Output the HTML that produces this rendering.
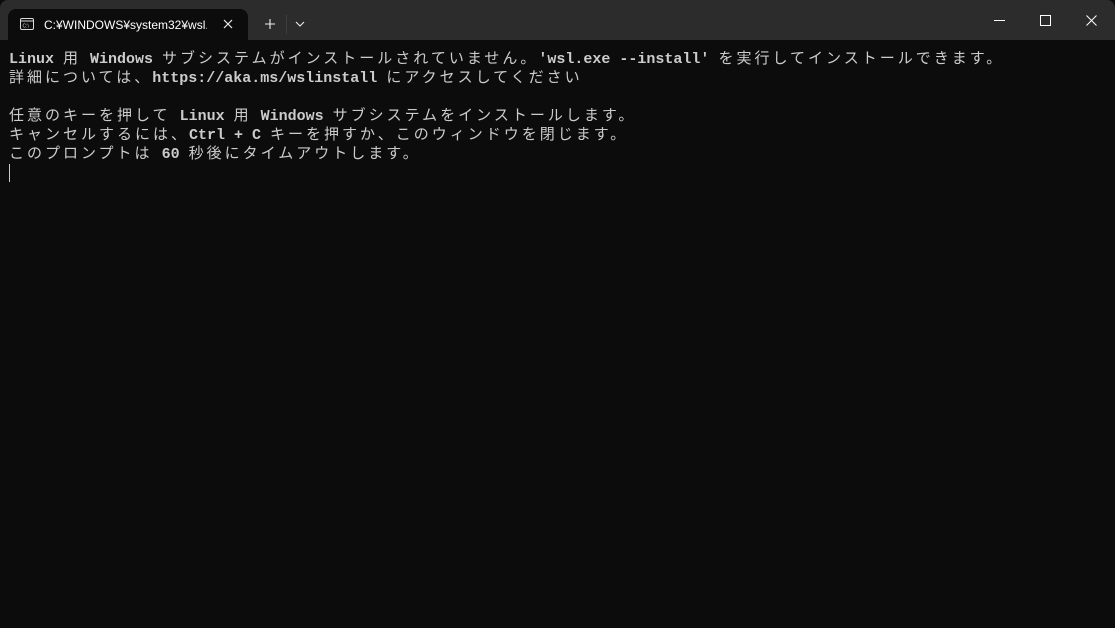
<!DOCTYPE html>
<html><head><meta charset="utf-8"><style>
html,body{margin:0;padding:0;width:1115px;height:628px;overflow:hidden;background:#0c0c0c}
.title{position:absolute;left:0;top:0;width:1115px;height:40px;background:#2c2c2c;border-radius:8px 8px 0 0}
.tab{position:absolute;left:8px;top:9px;width:240px;height:31px;background:#0c0c0c;border-radius:8px 8px 0 0}
.tabtxt{position:absolute;left:44px;top:17px;font:12px/16px "Liberation Sans","Noto Sans CJK JP",sans-serif;color:#fff;white-space:nowrap;width:163px;overflow:hidden}
.term{position:absolute;left:9px;top:48px;color:#cccccc;font:bold 15px/19px "Liberation Mono",monospace}
.term div{height:19px;white-space:pre;overflow:visible}
.j{font-family:"Noto Sans CJK JP",sans-serif;font-weight:normal;letter-spacing:3px;line-height:19px}
.cursor{position:absolute;left:9px;top:164px;width:1px;height:18px;background:#ccc}
</style></head><body>
<div class="title"></div>
<div class="tab"></div>
<svg style="position:absolute;left:20px;top:18px" width="14" height="12" viewBox="0 0 14 12"><rect x="0.5" y="0.5" width="13" height="11" rx="1.5" fill="none" stroke="#ddd"/><line x1="0.5" y1="3" x2="13.5" y2="3" stroke="#ddd"/><text x="2.5" y="9.5" font-size="5" fill="#ddd" font-family="Liberation Sans">C:\</text></svg>
<div class="tabtxt">C:¥WINDOWS¥system32¥wsl.exe</div>
<svg style="position:absolute;left:223px;top:19px" width="10" height="10"><path d="M1 1L9 9M9 1L1 9" stroke="#eee" stroke-width="1.2"/></svg>
<svg style="position:absolute;left:264px;top:18px" width="12" height="12"><path d="M6 1V11M1 6H11" stroke="#eee" stroke-width="1.1"/></svg>
<div style="position:absolute;left:286px;top:15px;width:1px;height:19px;background:#3e3e3e"></div>
<svg style="position:absolute;left:295px;top:21px" width="10" height="6"><path d="M1 1L5 5L9 1" stroke="#eee" fill="none" stroke-width="1.1"/></svg>
<div style="position:absolute;left:994px;top:20px;width:11px;height:1px;background:#fff"></div>
<div style="position:absolute;left:1040px;top:15px;width:9px;height:9px;border:1px solid #fff"></div>
<svg style="position:absolute;left:1086px;top:15px" width="11" height="11"><path d="M0.5 0.5L10.5 10.5M10.5 0.5L0.5 10.5" stroke="#fff" stroke-width="1"/></svg>
<div class="term">
<div>Linux <span class="j">用</span> Windows <span class="j">サブシステムがインストールされていません。</span>'wsl.exe --install' <span class="j">を実行してインストールできます。</span></div>
<div><span class="j">詳細については、</span>https://aka.ms/wslinstall <span class="j">にアクセスしてください</span></div>
<div></div>
<div><span class="j">任意のキーを押して</span> Linux <span class="j">用</span> Windows <span class="j">サブシステムをインストールします。</span></div>
<div><span class="j">キャンセルするには、</span>Ctrl + C <span class="j">キーを押すか、このウィンドウを閉じます。</span></div>
<div><span class="j">このプロンプトは</span> 60 <span class="j">秒後にタイムアウトします。</span></div>
</div>
<div class="cursor"></div>
</body></html>
